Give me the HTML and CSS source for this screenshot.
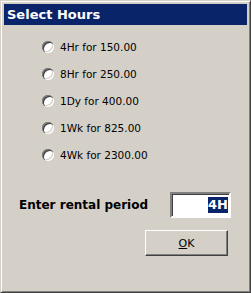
FILE: index.html
```html
<!DOCTYPE html>
<html lang="en">
<head>
    <meta charset="UTF-8">
    <title>Select Hours</title>
    <link rel="stylesheet" href="styles.css">
</head>
<body>
    <div class="window">
        <div class="titlebar">Select Hours</div>
        <div class="content">
            <div class="options">
                <label class="option"><span class="radio"></span>4Hr for 150.00</label>
                <label class="option"><span class="radio"></span>8Hr for 250.00</label>
                <label class="option"><span class="radio"></span>1Dy for 400.00</label>
                <label class="option"><span class="radio"></span>1Wk for 825.00</label>
                <label class="option"><span class="radio"></span>4Wk for 2300.00</label>
            </div>
            <div class="entry">
                <span class="prompt">Enter rental period</span>
                <div class="field"><span class="sel">4H</span></div>
            </div>
            <div class="actions">
                <button class="btn"><u>O</u>K</button>
            </div>
        </div>
    </div>
</body>
</html>
```

FILE: styles.css
```css
html, body {
    margin: 0;
    padding: 0;
}
body {
    width: 251px;
    height: 293px;
    background: #d4d0c8;
    font-family: Tahoma, 'DejaVu Sans', sans-serif;
    font-size: 11px;
    color: #000;
}
.window {
    box-sizing: border-box;
    width: 251px;
    height: 293px;
    border: 1px solid;
    border-color: #d4d0c8 #404040 #404040 #d4d0c8;
    box-shadow: inset 1px 1px 0 #fff, inset -1px -1px 0 #808080;
    padding: 3px;
}
.titlebar {
    height: 21px;
    line-height: 21px;
    background: #0a246a;
    color: #fff;
    font-weight: bold;
    font-size: 13px;
    padding-left: 3px;
}
.content {
    padding: 0 0 0 15px;
}
.options {
    padding: 15px 0 0 23px;
    display: flex;
    flex-direction: column;
    gap: 14px;
}
.option {
    display: flex;
    align-items: center;
    height: 13px;
    font-size: 10.5px;
}
.radio {
    width: 12px;
    height: 12px;
    border-radius: 50%;
    background: #fff;
    box-shadow: inset 1px 1px 0 #808080, inset 2px 2px 0 #404040, inset -1px -1px 0 #fff, inset -2px -2px 0 #d4d0c8;
    margin-right: 6px;
}
.entry {
    display: flex;
    align-items: center;
    margin-top: 31px;
}
.prompt {
    font-weight: bold;
    font-size: 12px;
    width: 151px;
}
.field {
    box-sizing: border-box;
    width: 61px;
    height: 26px;
    background: #fff;
    border: 2px solid;
    border-color: #808080 #fff #fff #808080;
    box-shadow: inset 1px 1px 0 #404040;
    display: flex;
    justify-content: flex-end;
    align-items: center;
    padding-right: 1px;
}
.sel {
    background: #0a246a;
    color: #fff;
    font-weight: bold;
    font-size: 13px;
    line-height: 16px;
}
.actions {
    display: flex;
    justify-content: flex-end;
    padding-right: 19px;
    margin-top: 12px;
}
.btn {
    box-sizing: border-box;
    width: 83px;
    height: 26px;
    background: #d4d0c8;
    border: 1px solid;
    border-color: #fff #404040 #404040 #fff;
    box-shadow: inset -1px -1px 0 #808080;
    font-family: inherit;
    font-size: 11px;
    padding: 0;
}
```
